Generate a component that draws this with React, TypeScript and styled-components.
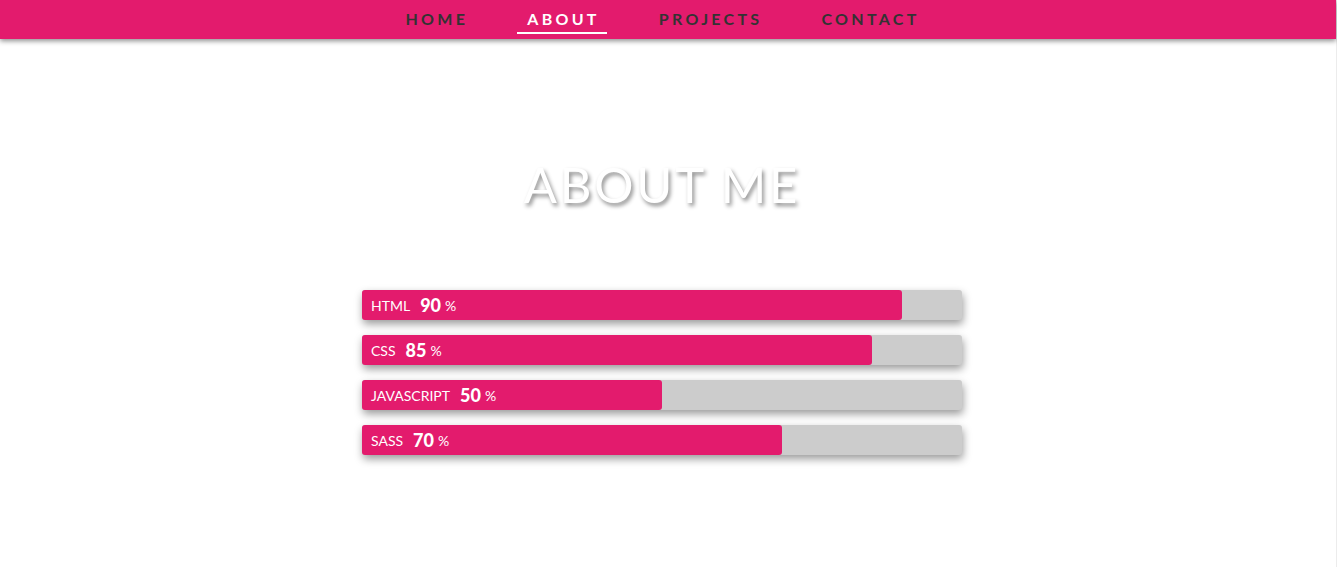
import styled, { createGlobalStyle } from 'styled-components'

const GlobalStyle = createGlobalStyle`
  html, body {
    margin: 0;
    padding: 0;
    background: #ffffff;
  }
  body {
    font-family: Lato, "Open Sans", sans-serif;
    overflow: hidden;
  }
  #root {
    min-height: 567px;
    border-right: 1px solid #ececec;
  }
`

const Page = styled.div`
  display: flex;
  flex-direction: column;
  min-height: 567px;
`

const NavBar = styled.nav`
  height: 39px;
  background: #e31b6d;
  box-shadow: 0 2px 5px rgba(0, 0, 0, 0.45);
  display: flex;
  justify-content: center;
  align-items: flex-start;
  gap: 42px;
  padding-right: 14px;
  position: relative;
  z-index: 1;
`

const NavLink = styled.a<{ $active?: boolean }>`
  font-family: Lato, sans-serif;
  font-weight: 700;
  font-size: 16px;
  line-height: 19px;
  letter-spacing: 3.3px;
  text-transform: uppercase;
  text-decoration: none;
  color: ${(p) => (p.$active ? '#ffffff' : '#333333')};
  padding: 9px 7px 4px 10px;
  border-bottom: 2px solid ${(p) => (p.$active ? '#ffffff' : 'transparent')};
`

const About = styled.section`
  display: flex;
  flex-direction: column;
  align-items: center;
  padding: 115px 12px 0 0;
`

const Title = styled.h1`
  margin: 0;
  font-family: Lato, sans-serif;
  font-weight: 400;
  font-size: 49px;
  line-height: 60px;
  letter-spacing: 2.8px;
  color: #ffffff;
  text-shadow: 2px 3px 4px rgba(0, 0, 0, 0.45);
`

const Bars = styled.div`
  margin-top: 76px;
  width: 600px;
  display: flex;
  flex-direction: column;
  gap: 15px;
`

const Track = styled.div`
  height: 30px;
  background: #cccccc;
  border-radius: 3px;
  box-shadow: 1px 4px 8px rgba(0, 0, 0, 0.4);
  display: flex;
`

const Fill = styled.div`
  height: 100%;
  background: #e31b6d;
  border-radius: 3px;
  display: flex;
  align-items: center;
  padding-left: 9px;
  box-sizing: border-box;
  color: #ffffff;
  white-space: nowrap;
`

const Skill = styled.span`
  font-size: 14px;
  font-weight: 400;
  margin-right: 10px;
`

const Value = styled.span`
  font-size: 18px;
  font-weight: 900;
  margin-right: 4px;
`

const Percent = styled.span`
  font-size: 14px;
  font-weight: 400;
`

const skills = [
  { name: 'HTML', value: 90 },
  { name: 'CSS', value: 85 },
  { name: 'JavaScript', value: 50 },
  { name: 'Sass', value: 70 },
]

export default function App() {
  return (
    <Page>
      <GlobalStyle />
      <NavBar>
        <NavLink href="#">Home</NavLink>
        <NavLink href="#" $active>About</NavLink>
        <NavLink href="#">Projects</NavLink>
        <NavLink href="#">Contact</NavLink>
      </NavBar>
      <About>
        <Title>ABOUT ME</Title>
        <Bars>
          {skills.map((s) => (
            <Track key={s.name}>
              <Fill style={{ width: `${s.value}%` }}>
                <Skill>{s.name.toUpperCase()}</Skill>
                <Value>{s.value}</Value>
                <Percent>%</Percent>
              </Fill>
            </Track>
          ))}
        </Bars>
      </About>
    </Page>
  )
}
